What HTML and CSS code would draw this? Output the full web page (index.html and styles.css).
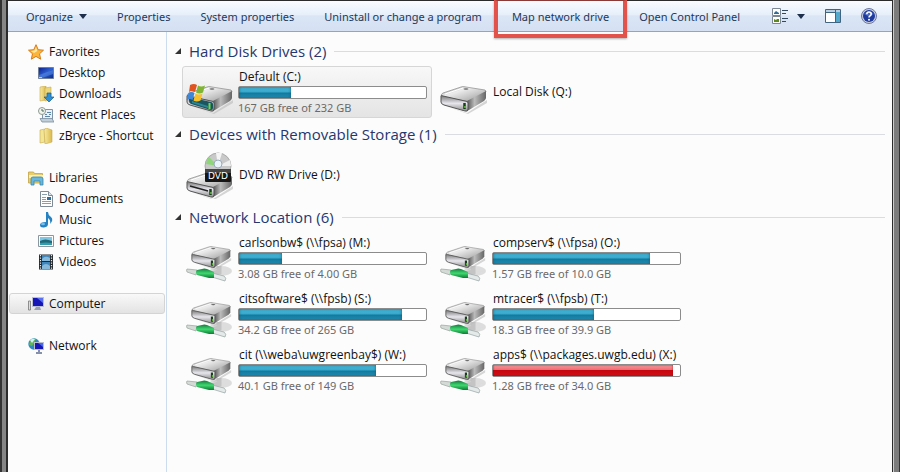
FILE: index.html
```html
<!DOCTYPE html>
<html lang="en">
  <head>
    <meta charset="utf-8">
    <title>Computer</title>
    <link rel="stylesheet" href="styles.css">
  </head>
  <body>
    <!-- shared drive icons -->
    <svg class="defs" aria-hidden="true">
      <defs>
        <linearGradient id="top" x1="0" y1="0" x2="1" y2="1">
          <stop offset="0" stop-color="#999"/><stop offset=".35" stop-color="#ececec"/><stop offset="1" stop-color="#979797"/>
        </linearGradient>
        <linearGradient id="front" x1="0" y1="0" x2="0" y2="1">
          <stop offset="0" stop-color="#777"/><stop offset=".5" stop-color="#e6e6ec"/><stop offset="1" stop-color="#8b8b8b"/>
        </linearGradient>
        <linearGradient id="side" x1="0" y1="0" x2="1" y2="0">
          <stop offset="0" stop-color="#555"/><stop offset=".4" stop-color="#bbb"/><stop offset="1" stop-color="#666"/>
        </linearGradient>
        <linearGradient id="green" x1="0" y1="0" x2="0" y2="1">
          <stop offset="0" stop-color="#14783a"/><stop offset=".5" stop-color="#3fd871"/><stop offset="1" stop-color="#0d7b33"/>
        </linearGradient>
        <linearGradient id="folder" x1="0" y1="0" x2="1" y2="0">
          <stop offset="0" stop-color="#f7eba4"/><stop offset="1" stop-color="#dcb84a"/>
        </linearGradient>
        <linearGradient id="screen" x1="0" y1="0" x2="1" y2="1">
          <stop offset="0" stop-color="#0b1c8c"/><stop offset=".5" stop-color="#2c5fd0"/><stop offset="1" stop-color="#0a2a86"/>
        </linearGradient>
        <symbol id="box" viewBox="0 0 48 28">
          <path d="M3 19l24 8 20-13v3L28 28z" fill="#bbb" opacity=".6"/>
          <path d="M1 10Q1 8 3 7L21 1Q23 0 26 1L45 4Q47 5 45 7L29 15Q27 16 25 15L3 11z" fill="url(#top)" stroke="#8a8a8a" stroke-width=".7"/>
          <path d="M27 15L46 5V12Q46 13 44 15L29 24L27 25z" fill="url(#side)"/>
          <path d="M1 10Q1 9 3 10L25 15Q28 15 28 17V23Q28 26 25 25L4 19Q1 18 1 16z" fill="url(#front)" stroke="#555" stroke-width="1"/>
          <path d="M5 8L23 2" stroke="#fff" stroke-width="1"/>
          <path d="M24.500 17v6" stroke="#173d19" stroke-width="2.500"/>
          <path d="M25 20v2" stroke="#7be04c" stroke-width="1.200"/>
          <ellipse cx="26" cy="3" rx="2.500" ry=".8" fill="#666"/>
        </symbol>
        <symbol id="disk" viewBox="0 0 48 48">
          <use href="#box" x="0" y="18" width="48" height="28"/>
        </symbol>
        <symbol id="system" viewBox="0 0 48 48">
          <use href="#box" x="0" y="18" width="48" height="28"/>
          <path d="M3 29l22 5q2 0 2 2v4q0 2-2 2L5 36q-2-1-2-3z" fill="#1b5560"/>
          <path d="M6 33l16 5v2L6 35z" fill="#2c8794"/>
          <path d="M23.500 35v6" stroke="#6fda4b" stroke-width="2"/>
          <path d="M4 17q4-2 7 0l-2 7q-3-2-6 0z" fill="#e0551f"/>
          <path d="M12 17.500q3 2 7 0l-2 7q-4 2-7 0z" fill="#7fb532"/>
          <path d="M2.500 25q3-2 6 0l-2 7q-3-2-6 0z" fill="#3d86d8"/>
          <path d="M9.500 25.500q3 2 7 0l-2 7q-4 2-7 0z" fill="#f6c12b"/>
        </symbol>
        <symbol id="dvd" viewBox="0 0 48 48">
          <use href="#box" x="0" y="21" width="48" height="28"/>
          <path d="M4 35l18 5" stroke="#222" stroke-width="1.500"/>
          <circle cx="32" cy="15" r="13" fill="#c9c9c9" stroke="#aaa"/>
          <path d="M32 15L20 13Q20 9 23 6z" fill="#8fd67b"/>
          <path d="M32 15L30 2h6z" fill="#f5f5f5"/>
          <path d="M32 15L44 9l1 6z" fill="#eee"/>
          <circle cx="32" cy="13" r="4" fill="#e9f3f8" stroke="#9ab"/>
          <rect x="19" y="18" width="26" height="13" rx="1" fill="#161616"/>
          <path d="M19 18h26v4H19z" fill="#444"/>
          <text x="32" y="28" class="dvd-text">DVD</text>
        </symbol>
        <symbol id="netdrive" viewBox="0 0 48 48">
          <ellipse cx="35" cy="37" rx="11" ry="5" fill="#ddd"/>
          <path d="M33 32v6l-8 2" stroke="#c4c4c4" stroke-width="5" fill="none"/>
          <use href="#box" x="5" y="12" width="41" height="24"/>
          <path d="M1 35l10 1-1 5-9-3q-1-2 0-3z" fill="#d4dad6" stroke="#98a39c" stroke-width=".7"/>
          <path d="M26 39l12 3q3 2 1 5l-13-4z" fill="#e4e9ea" stroke="#98a3a3" stroke-width=".7"/>
          <path d="M11 36l5-1q2-1 5 0l7 3v6l-5 0-12-3q-2-3 0-5z" fill="url(#green)"/>
        </symbol>
      </defs>
    </svg>

    <div class="window">
      <div class="toolbar">
        <button class="tool">Organize <span class="arrow"></span></button>
        <button class="tool">Properties</button>
        <button class="tool">System properties</button>
        <button class="tool">Uninstall or change a program</button>
        <button class="tool marked">Map network drive</button>
        <button class="tool">Open Control Panel</button>
        <div class="tool-icons">
          <button class="icon-btn" aria-label="Change your view">
            <svg width="16" height="16" viewBox="0 0 16 16">
              <path d="M.5.500h8v7h-8zM.5 8.500h8v7h-8z" fill="#fff" stroke="#7c8795"/>
              <path d="M2 5l2-2 3 2v1H2z" fill="#2d6d99"/>
              <path d="M2 11l2 1 1-1 2 0v3H2z" fill="#5c8a20"/>
              <path d="M10 2.500h6M10 5.500h4M10 10.500h6M10 13.500h4" stroke="#34495e"/>
            </svg>
            <span class="arrow"></span>
          </button>
          <button class="icon-btn" aria-label="Preview pane">
            <svg width="16" height="14" viewBox="0 0 16 14">
              <path d="M.5.500h15v13H.5z" fill="#fff" stroke="#416481"/>
              <path d="M1 1h14v2H1z" fill="#b9d0e2"/>
              <path d="M10 3h5v10h-5z" fill="#52a9cc"/>
              <path d="M10.500 1v12M1 3.500h9" stroke="#416481"/>
            </svg>
          </button>
          <button class="icon-btn" aria-label="Help">
            <svg width="16" height="16" viewBox="0 0 16 16">
              <circle cx="8" cy="8" r="7.500" fill="#c9cfe2" stroke="#6d779c"/>
              <circle cx="8" cy="8" r="6" fill="#1e3a9c"/>
              <path d="M3 6q5-5 10 0-3 1-4 3z" fill="#4a6cc8"/>
              <path d="M5.800 6.200q0-2.200 2.200-2.200t2.200 2q0 1.200-1.200 1.900Q8 8.400 8 9.600" fill="none" stroke="#fff" stroke-width="1.600"/>
              <circle cx="8" cy="11.800" r="1" fill="#fff"/>
            </svg>
          </button>
        </div>
      </div>

      <div class="main">
        <nav class="sidebar">
          <ul class="tree">
            <li><a href="#">
              <svg width="16" height="16" viewBox="0 0 16 16"><path d="M8 .7l2.200 5 5.300.500-4 3.600 1.200 5.400L8 12.400l-4.700 2.800 1.200-5.400-4-3.600 5.300-.5z" fill="#fbb63a" stroke="#d77b18"/><path d="M8 3l1.300 4L6 9 3 7l3.500-.5z" fill="#ffe9a8"/></svg>
              Favorites</a></li>
            <li class="child"><a href="#">
              <svg width="16" height="16" viewBox="0 0 16 16"><path d="M.5 2.500h15v11H.5z" fill="url(#screen)" stroke="#6f7f9c"/><path d="M1 10L15 5v4L4 13H1z" fill="#5d8fe8" opacity=".5"/><path d="M1 12.500h3" stroke="#8fe0f0"/></svg>
              Desktop</a></li>
            <li class="child"><a href="#">
              <svg width="16" height="16" viewBox="0 0 16 16"><path d="M2 1l6-1v14l-6 1z" fill="url(#folder)" stroke="#c9aa4c" stroke-width=".6"/><path d="M7 2l6-1v13l-6 1z" fill="#ecd77c" stroke="#c9aa4c" stroke-width=".6"/><path d="M9 7h4v4h3l-5 5-5-5h3z" fill="#2d8fd5" stroke="#155f9c" stroke-width=".7"/></svg>
              Downloads</a></li>
            <li class="child"><a href="#">
              <svg width="16" height="16" viewBox="0 0 16 16"><path d="M4.500 2.500h10v10h-10z" fill="#e9f1f7" stroke="#8093a5"/><path d="M2 11.500h12l2 3.500H4z" fill="#c0ced9" stroke="#7b8e9f" stroke-width=".8"/><path d="M9 5.500h4M7 7.500h2m2 0h2M7 9.500h5" stroke="#5e86a6"/><circle cx="4" cy="4" r="3.500" fill="#f1f5ee" stroke="#8d9a92"/><path d="M4 2v2h2" stroke="#4c6b58" fill="none"/></svg>
              Recent Places</a></li>
            <li class="child"><a href="#">
              <svg width="16" height="16" viewBox="0 0 16 16"><path d="M2 2l5-1v13l-5 1z" fill="#f3e596" stroke="#c9aa4c" stroke-width=".6"/><path d="M6 2l2-2 6 2v12l-7 2z" fill="url(#folder)" stroke="#c9aa4c" stroke-width=".6"/></svg>
              zBryce - Shortcut</a></li>
          </ul>
          <ul class="tree">
            <li><a href="#">
              <svg width="16" height="16" viewBox="0 0 16 16"><path d="M.5 2h5l1 1.500h8V13H.5z" fill="#e9cf6b" stroke="#c2a244" stroke-width=".8"/><path d="M1 5h14v3H1z" fill="#f8efb8"/><path d="M3 15V9q0-2 2-2h8q2 0 2 2v6h-3v-4H6v4z" fill="#69b7dc" stroke="#3b85ac" stroke-width=".8"/></svg>
              Libraries</a></li>
            <li class="child"><a href="#">
              <svg width="16" height="16" viewBox="0 0 16 16"><path d="M2.500.500h8l4 4v11h-12z" fill="#fff" stroke="#7e8b96"/><path d="M10.500.500v4h4" fill="#dce5eb" stroke="#7e8b96"/><path d="M4 3.500h5M4 6.500h4M4 8.500h4M4 10.500h9M4 12.500h9" stroke="#8a9eae"/><path d="M9 6h4v3H9z" fill="#2d6f9f"/></svg>
              Documents</a></li>
            <li class="child"><a href="#">
              <svg width="16" height="16" viewBox="0 0 16 16"><path d="M8 0h2q0 3 3 5 3 3-1 7 1-4-2-6v6q0 3-4 3.500-4 .3-4-2.500 0-3 6-3z" fill="#2583c4"/><ellipse cx="5" cy="12" rx="2" ry="1.300" fill="#6fc1ee"/></svg>
              Music</a></li>
            <li class="child"><a href="#">
              <svg width="16" height="16" viewBox="0 0 16 16"><path d="M.5 2.500h15v11H.5z" fill="#fff" stroke="#8b979f"/><path d="M2 4h12v8H2z" fill="#7fc5e4"/><path d="M2 8q5-3 12 0v4H2z" fill="#226978"/><path d="M2 10q6-1 12 0v2H2z" fill="#2f9fb0"/></svg>
              Pictures</a></li>
            <li class="child"><a href="#">
              <svg width="16" height="16" viewBox="0 0 16 16"><path d="M1 .5h14v15H1z" fill="#23282e"/><path d="M4 1h8v6H4zM4 8h8v7H4z" fill="#3f86bb"/><path d="M4 5q3-4 8-1v3H4zM4 12q4-4 8 0v3H4z" fill="#86b9da"/><path d="M2.500 1v15M13.500 1v15" stroke="#e8edf0" stroke-width="1.200" stroke-dasharray="1.200 1.300"/></svg>
              Videos</a></li>
          </ul>
          <ul class="tree">
            <li class="active"><a href="#">
              <svg width="16" height="16" viewBox="0 0 16 16"><path d="M.5 5h2v9h-2z" fill="#ddd" stroke="#777" stroke-width=".8"/><path d="M4 1h12v10H4z" fill="#b9bfd0"/><path d="M5 2h10v8H5z" fill="#1516b5"/><path d="M9 2h6v5z" fill="#5a6ff0"/><path d="M8 11h4l1 3H6z" fill="#9aa0b5"/></svg>
              Computer</a></li>
          </ul>
          <ul class="tree">
            <li><a href="#">
              <svg width="16" height="16" viewBox="0 0 16 16"><circle cx="6" cy="6" r="5.700" fill="#2d8ac0"/><path d="M2 3q3-3 6-2L6 5 4 8 1 7zM7 6l4-3v4z" fill="#62b558"/><path d="M2 2q3-2 5-1L4 5z" fill="#d3f0ee"/><path d="M6 4h10v8H6z" fill="#b9bfd0"/><path d="M7 5h8v6H7z" fill="#1516b5"/><path d="M10 5h5v4z" fill="#4a66ee"/><path d="M10 12h2v2h2v2H8v-2h2z" fill="#8590ad"/></svg>
              Network</a></li>
          </ul>
        </nav>

        <div class="content">
          <section>
            <h2><button class="toggle">Hard Disk Drives (2)</button></h2>
            <div class="drives">
              <a class="drive selected" href="#">
                <svg class="pic"><use href="#system"/></svg>
                <div class="info">
                  <div class="name">Default (C:)</div>
                  <div class="bar"><div class="fill" style="width:28%"></div></div>
                  <div class="free">167 GB free of 232 GB</div>
                </div>
              </a>
              <a class="drive" href="#">
                <svg class="pic"><use href="#disk"/></svg>
                <div class="info">
                  <div class="name">Local Disk (Q:)</div>
                </div>
              </a>
            </div>
          </section>

          <section>
            <h2><button class="toggle">Devices with Removable Storage (1)</button></h2>
            <div class="drives">
              <a class="drive" href="#">
                <svg class="pic"><use href="#dvd"/></svg>
                <div class="info">
                  <div class="name">DVD RW Drive (D:)</div>
                </div>
              </a>
            </div>
          </section>

          <section>
            <h2><button class="toggle">Network Location (6)</button></h2>
            <div class="drives">
              <a class="drive" href="#">
                <svg class="pic"><use href="#netdrive"/></svg>
                <div class="info">
                  <div class="name">carlsonbw$ (\\fpsa) (M:)</div>
                  <div class="bar"><div class="fill" style="width:23%"></div></div>
                  <div class="free">3.08 GB free of 4.00 GB</div>
                </div>
              </a>
              <a class="drive" href="#">
                <svg class="pic"><use href="#netdrive"/></svg>
                <div class="info">
                  <div class="name">compserv$ (\\fpsa) (O:)</div>
                  <div class="bar"><div class="fill" style="width:84%"></div></div>
                  <div class="free">1.57 GB free of 10.0 GB</div>
                </div>
              </a>
              <a class="drive" href="#">
                <svg class="pic"><use href="#netdrive"/></svg>
                <div class="info">
                  <div class="name">citsoftware$ (\\fpsb) (S:)</div>
                  <div class="bar"><div class="fill" style="width:87%"></div></div>
                  <div class="free">34.2 GB free of 265 GB</div>
                </div>
              </a>
              <a class="drive" href="#">
                <svg class="pic"><use href="#netdrive"/></svg>
                <div class="info">
                  <div class="name">mtracer$ (\\fpsb) (T:)</div>
                  <div class="bar"><div class="fill" style="width:54%"></div></div>
                  <div class="free">18.3 GB free of 39.9 GB</div>
                </div>
              </a>
              <a class="drive" href="#">
                <svg class="pic"><use href="#netdrive"/></svg>
                <div class="info">
                  <div class="name">cit (\\weba\uwgreenbay$) (W:)</div>
                  <div class="bar"><div class="fill" style="width:73%"></div></div>
                  <div class="free">40.1 GB free of 149 GB</div>
                </div>
              </a>
              <a class="drive" href="#">
                <svg class="pic"><use href="#netdrive"/></svg>
                <div class="info">
                  <div class="name">apps$ (\\packages.uwgb.edu) (X:)</div>
                  <div class="bar"><div class="fill full" style="width:96%"></div></div>
                  <div class="free">1.28 GB free of 34.0 GB</div>
                </div>
              </a>
            </div>
          </section>
        </div>
      </div>
    </div>
  </body>
</html>
```

FILE: styles.css
```css
* {
  box-sizing: border-box;
}
body {
  margin: 0;
  font-family: "Segoe UI", "Open Sans", sans-serif;
  font-size: 12px;
  color: #111;
  /* window frame on both sides */
  background: linear-gradient(to right, #333 0 2px, #858585 2px 6px, #2b2b2b 6px 8px, transparent 8px calc(100% - 8px), #2b2b2b calc(100% - 8px) calc(100% - 7px), #ccc calc(100% - 7px) calc(100% - 6px), #7c7c7c calc(100% - 6px) calc(100% - 1px), #333 calc(100% - 1px));
}
button {
  font: inherit;
  border: none;
  background: none;
  padding: 0;
  cursor: pointer;
}
a {
  color: inherit;
  text-decoration: none;
}
.defs {
  position: absolute;
  width: 0;
  height: 0;
}
.window {
  display: flex;
  flex-direction: column;
  min-height: 100vh;
  margin: 0 8px;
  border-top: 1px solid #2b2b2b;
  background: #fcfcfc;
}

/* toolbar */
.toolbar {
  display: flex;
  height: 31px;
  padding: 0 0 0 3px;
  border-bottom: 1px solid #8fa5c4;
  background: linear-gradient(#fafcff, #e6effa 45%, #dae5f5 50%, #d5e1f3);
  font-family: "Segoe UI", "Noto Sans", sans-serif;
  font-size: 11px;
}
.tool {
  position: relative;
  display: flex;
  align-items: center;
  padding: 0 15px;
  color: #1e395b;
  white-space: nowrap;
}
.arrow {
  display: inline-block;
  margin-left: 6px;
  border: 4px solid transparent;
  border-top: 5px solid #1e2f4b;
  border-bottom: 0;
}
.marked::after {
  content: "";
  position: absolute;
  top: -1px;
  bottom: -7px;
  left: -3px;
  right: -3px;
  border: 4px solid #e2534b;
  border-top: 1px solid #8c3a36;
  box-shadow: 0 1px 2px rgba(0, 0, 0, 0.3);
}
.tool-icons {
  display: flex;
  align-items: center;
  gap: 20px;
  margin-left: auto;
  padding-right: 15px;
}
.icon-btn {
  display: flex;
  align-items: center;
}
.icon-btn .arrow {
  margin-left: 9px;
}

.main {
  display: flex;
  flex: 1;
}

/* sidebar */
.sidebar {
  flex: 0 0 159px;
  padding: 9px 1px;
  border-right: 1px solid #cbdcee;
}
.tree {
  list-style: none;
  margin: 0 0 21px;
  padding: 0;
}
.tree a {
  display: flex;
  align-items: center;
  gap: 5px;
  height: 21px;
  padding-left: 18px;
  border: 1px solid transparent;
  border-radius: 3px;
  white-space: nowrap;
}
.tree .child a {
  padding-left: 28px;
}
.tree .active a {
  border-color: #d4d4d4;
  background: linear-gradient(#f9f9f9, #e3e3e3);
}

/* drive groups */
.content {
  flex: 1;
  padding: 7px 7px 0 8px;
}
h2 {
  display: flex;
  align-items: center;
  gap: 8px;
  height: 24px;
  margin: 0 0 3px;
  font-size: 15px;
  font-weight: normal;
}
h2::after {
  content: "";
  flex: 1;
  border-top: 1px solid #d9dce3;
}
.toggle {
  display: flex;
  align-items: center;
  gap: 8px;
  color: #26376f;
}
.toggle::before {
  content: "";
  border-left: 6px solid transparent;
  border-bottom: 6px solid #333;
}
.drives {
  display: grid;
  grid-template-columns: repeat(auto-fill, 250px);
  grid-auto-rows: 52px;
  gap: 4px;
  padding-left: 7px;
  max-width: 520px;
  margin-bottom: 4px;
}
.drive {
  display: flex;
  align-items: center;
  gap: 4px;
  padding: 0 4px 0 3px;
  border: 1px solid transparent;
  border-radius: 3px;
}
.selected {
  border-color: #d6d6d6;
  background: linear-gradient(#f8f8f8, #e4e4e4);
}
.pic {
  flex: none;
  width: 48px;
  height: 48px;
}
.info {
  flex: 1;
  min-width: 0;
}
.name,
.free {
  line-height: 18px;
  padding-left: 1px;
  white-space: nowrap;
}
.free {
  padding-left: 0;
  font-family: "Segoe UI", "Noto Sans", sans-serif;
  font-size: 11px;
  color: #6a6a6a;
}
.bar {
  height: 13px;
  border: 1px solid #8c8c8c;
  border-radius: 2px;
  background: #fff;
}
.fill {
  height: 100%;
  background: linear-gradient(#4cb8d6, #36a9cb 45%, #14789e 55%, #2391b5);
  box-shadow: inset 0 0 3px #0b5d7e;
}
.full {
  background: linear-gradient(#f59a9e, #ec6c72 45%, #c6070f 50%, #cf1119);
  box-shadow: inset 0 0 2px #a00;
}
.dvd-text {
  font: 9px "DejaVu Sans", sans-serif;
  fill: #fff;
  text-anchor: middle;
}
```
